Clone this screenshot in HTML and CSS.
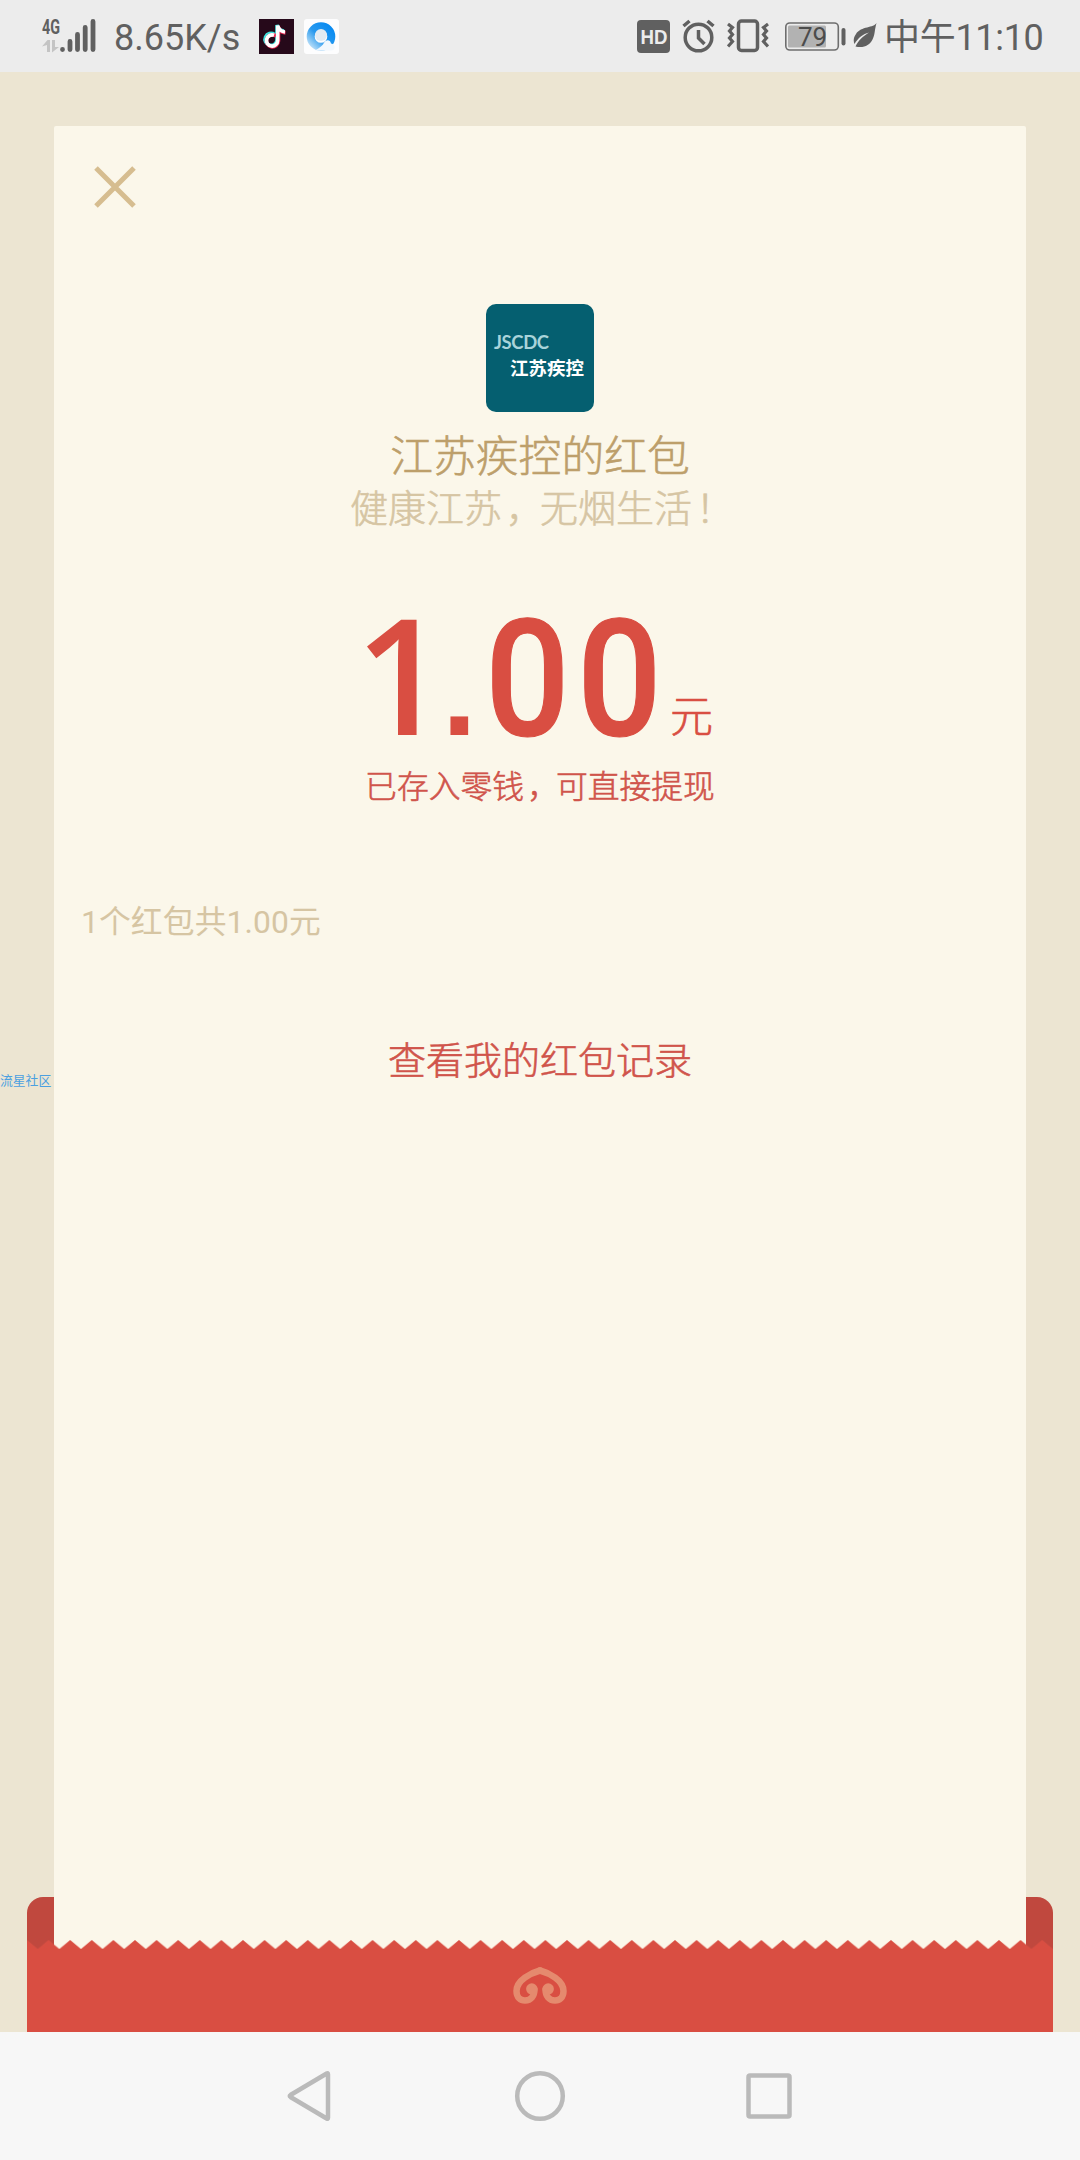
FILE: index.html
```
<!DOCTYPE html>
<html lang="zh-CN">
<head>
<meta charset="utf-8">
<title>红包</title>
<link rel="stylesheet" href="styles.css">
</head>
<body>
<header class="status">
  <svg class="signal" width="54" height="36" viewBox="0 0 54 36">
    <text class="signal-label" x="0" y="15" textLength="18" lengthAdjust="spacingAndGlyphs">4G</text>
    <path class="signal-data" d="M0 27.500L5.500 21H8v12H5V26zM10 21h3v7h4L10 33.500z"/>
    <path class="signal-bars" d="M20.500 30.500v.1M28 22.500v8M35.500 15.500v15M43.200 8.500v22M51 2.500v28"/>
  </svg>
  <span class="speed">8.65K/s</span>
  <svg class="app-icon tiktok" width="35" height="35" viewBox="0 0 35 35">
    <rect width="35" height="35" fill="#26091a"/>
    <g fill="none" stroke-width="3.600">
      <path stroke="#3fe0dd" d="M15.500 15.500a6 6 0 1 0 2.500 5V6c1 4 3 5.500 7 6"/>
      <path stroke="#ee2b55" d="M17 17a6 6 0 1 0 2.500 5V8c1 4 3 5.500 7 6"/>
      <path stroke="#fff" d="M15 16.200a5.600 5.600 0 1 0 3.700 5.300V6.500c.8 4 3 6 7.300 6.500"/>
    </g>
  </svg>
  <svg class="app-icon browser" width="35" height="35" viewBox="0 0 35 35">
    <defs><linearGradient id="ring" x1="1" y1="0" x2="0" y2="1"><stop offset="0" stop-color="#078af2"/><stop offset=".55" stop-color="#2899ee"/><stop offset="1" stop-color="#b9def8"/></linearGradient></defs>
    <rect width="35" height="35" rx="3" fill="#fdfdfe"/>
    <circle cx="17" cy="17.500" r="10.300" fill="none" stroke="url(#ring)" stroke-width="8"/>
    <circle cx="17" cy="16" r="6" fill="#e3ebf2"/>
    <path d="M11 31.500c3-2 5-3 8-6 2-5 7-6 8-1 5 1 5 7 0 7z" fill="#f2f8fd"/>
  </svg>
  <div class="status-right">
    <svg class="hd" width="33" height="33" viewBox="0 0 33 33">
      <rect width="33" height="33" rx="4" fill="#606060"/>
      <text class="hd-label" x="3.500" y="24" textLength="27" lengthAdjust="spacingAndGlyphs">HD</text>
    </svg>
    <svg class="alarm" width="34" height="34" viewBox="0 0 34 34" fill="none" stroke="#606060" stroke-width="3.500">
      <circle cx="16.500" cy="18.500" r="13.300"/><path d="M16.500 11v8l6 6M1.500 7l6-5M31.500 7l-6-5"/>
    </svg>
    <svg class="vibrate" width="42" height="34" viewBox="0 0 42 34" fill="none" stroke="#606060" stroke-width="3.500">
      <rect x="11.500" y="2" width="19" height="29.500" rx="3"/>
      <path stroke-width="3.200" d="M1 5l4.500 3.500-3 3.500 3 3.500-3 3.500 3 3.500-4.500 5M41 5l-4.500 3.500 3 3.500-3 3.500 3 3.500-3 3.500 4.500 5"/>
    </svg>
    <svg class="battery" width="61" height="30" viewBox="0 0 61 30">
      <rect x=".8" y="1" width="52.500" height="27" rx="4" fill="none" stroke="#6e6e6e" stroke-width="1.600"/>
      <rect x="3" y="3.500" width="38" height="22" rx="1.500" fill="#b2b2b2"/>
      <rect x="56.500" y="6" width="4" height="17.500" rx="2" fill="#606060"/>
      <text class="battery-label" x="13" y="24">79</text>
    </svg>
    <svg class="leaf" width="24" height="25" viewBox="0 0 24 25">
      <path fill="#606060" d="M23.500 0C21 5 8 3 3 11c-3 4-2.500 8-1.500 10C5 15 10 11 16 9.500 10 13 5 18 2.500 23.500c8 2 14-1 17-7C22 12 21.500 7 23.500 0z"/>
    </svg>
    <span class="time">中午11:10</span>
  </div>
</header>

<main class="page">
  <div class="envelope-back"></div>
  <section class="card">
    <svg class="close" width="42" height="42" viewBox="0 0 42 42"><path d="M2 2l38 38M40 2L2 40" stroke="#d6bd90" stroke-width="5"/></svg>
    <div class="avatar">
      <span class="avatar-en">JSCDC</span>
      <span class="avatar-cn">江苏疾控</span>
    </div>
    <h1 class="sender">江苏疾控的红包</h1>
    <p class="wish">健康江苏<span class="mark">，</span>无烟生活<span class="mark">！</span></p>
    <div class="amount">
      <span class="one">1</span><span class="dot">.</span><span class="digit">0</span><span class="digit">0</span><span class="unit">元</span>
    </div>
    <p class="saved">已存入零钱<span class="mark">，</span>可直接提现</p>
    <p class="summary">1个红包共1.00元</p>
    <a class="records">查看我的红包记录</a>
  </section>
  <footer class="envelope-front">
    <svg class="teeth" width="1026" height="9.500">
      <defs><pattern id="tooth" width="21.600" height="9.500" patternUnits="userSpaceOnUse"><path d="M0 0L10.800 9L21.600 0V9.500H0z" fill="#d94e42"/></pattern></defs>
      <rect width="1026" height="9.500" fill="url(#tooth)"/>
    </svg>
    <div class="envelope-body">
      <svg class="emblem" width="54" height="39" viewBox="0 0 54 39">
        <g fill="none" stroke="#e58a6e" stroke-width="6.500" stroke-linecap="round">
          <path d="M27 4.500C18 7 3.500 14 3.500 25c0 6.500 4 9.500 8.500 9.500 6 0 9.500-4.500 9.500-11"/>
          <path d="M27 4.500C36 7 50.500 14 50.500 25c0 6.500-4 9.500-8.500 9.500-6 0-9.500-4.500-9.500-11"/>
        </g>
        <circle cx="18.800" cy="23" r="5.700" fill="#e58a6e"/><circle cx="35.200" cy="23" r="5.700" fill="#e58a6e"/>
      </svg>
    </div>
  </footer>
  <span class="watermark">流星社区</span>
</main>

<nav class="nav">
  <svg width="50" height="54" viewBox="0 0 50 54"><path d="M44 5.200v43.600q0 1.500-1.300.7L6.500 28q-1.500-1 0-2L42.700 4.500q1.300-.8 1.300.7z"/></svg>
  <svg width="54" height="54" viewBox="0 0 54 54"><circle cx="28" cy="27" r="22.800"/></svg>
  <svg width="50" height="54" viewBox="0 0 50 54"><rect x="4.500" y="6.500" width="41" height="41" rx="1.500"/></svg>
</nav>
</body>
</html>
```
FILE: styles.css
```
* { box-sizing: border-box; }
body {
  margin: 0;
  height: 2160px;
  display: flex;
  flex-direction: column;
  background: #ece5d2;
  font-family: Roboto, "Noto Sans CJK SC", sans-serif;
  font-weight: 400;
}
h1, p { margin: 0; font-weight: 300; }
svg { display: block; flex: none; }

.status {
  height: 72px;
  flex: none;
  display: flex;
  align-items: flex-start;
  padding: 19px 36px 0 42px;
  background: #ececec;
  color: #606060;
  font-size: 36px;
  line-height: 38px;
}
.signal { overflow: visible; }
.signal-label { font: 700 20px Roboto, sans-serif; fill: #606060; }
.signal-data { fill: #c4c4c4; }
.signal-bars { fill: none; stroke: #606060; stroke-width: 4.8; stroke-linecap: round; }
.speed { margin-left: 18px; width: 127px; white-space: nowrap; }
.tiktok { margin-left: 18px; }
.browser { margin-left: 10px; }
.status-right { display: flex; margin-left: auto; }
.hd { margin: 1px 12px 0 0; }
.hd-label { font: 700 21px "Liberation Sans", sans-serif; fill: #ececec; }
.alarm { margin-right: 11px; }
.vibrate { margin-right: 16px; }
.battery { margin: 3px 7px 0 0; }
.battery-label { font: 400 26px Roboto, sans-serif; fill: #4c4c4c; }
.leaf { margin: 4px 7px 0 0; }
.time { width: 160px; white-space: nowrap; letter-spacing: -.3px; }

.page {
  position: relative;
  flex: 1;
  display: flex;
  flex-direction: column;
  padding-top: 54px;
}
.envelope-back {
  position: absolute;
  left: 27px;
  right: 27px;
  bottom: 0;
  height: 135px;
  border-radius: 16px 16px 0 0;
  background: #c0483e;
}
.card {
  position: relative;
  flex: 1;
  margin: 0 54px -9px;
  background: #fbf7ea;
  display: flex;
  flex-direction: column;
  align-items: center;
  border-radius: 2px 2px 0 0;
}
.close { align-self: flex-start; margin: 40px 0 0 40px; }
.avatar {
  width: 108px;
  height: 108px;
  margin-top: 96px;
  padding: 28px 0 0 8px;
  border-radius: 10px;
  background: #055f70;
  display: flex;
  flex-direction: column;
}
.avatar-en { font: 700 18.500px/20px Lato, sans-serif; color: #a9d3da; letter-spacing: -.4px; }
.avatar-cn { margin: 5px 0 0 16px; font: 700 18.500px/20px "Noto Sans CJK SC", sans-serif; color: #fff; white-space: nowrap; }
.sender, .wish, .unit, .saved, .records { -webkit-text-stroke: .6px currentColor; }
.mark { display: inline-block; transform: translateX(.1em); }
.sender { margin-top: 16px; font: 300 42.800px/50px "Noto Sans CJK SC", sans-serif; color: #bd9f6b; }
.wish { margin-top: 5px; font: 300 38px/46px "Noto Sans CJK SC", sans-serif; color: #d6c5a3; }
.amount {
  margin-top: 81px;
  height: 125px;
  width: 350px;
  display: flex;
  align-items: baseline;
  line-height: 125px;
  color: #d94e42;
}
.digit { width: 92px; text-align: center; font-family: Roboto, sans-serif; font-weight: 500; font-size: 163px; transform: scaleX(.91); -webkit-text-stroke: 1.2px currentColor; }
.one { width: 92px; margin-left: -10px; font-family: "Open Sans", sans-serif; font-weight: 600; font-size: 161px; }
.dot { width: 35px; margin: 0 4px 0 -5px; font-family: "Liberation Sans", sans-serif; font-weight: 700; font-size: 125px; }
.unit { margin-left: 5px; font: 300 43px/50px "Noto Sans CJK SC", sans-serif; transform: translateY(-3px); }
.saved { margin-top: 29px; font: 300 31.800px/40px "Noto Sans CJK SC", sans-serif; color: #d0544b; }
.summary { align-self: flex-start; margin: 98px 0 0 27px; font-size: 31.800px; line-height: 40px; letter-spacing: .1px; font-weight: 400; color: #d6c5a3; }
.records { margin-top: 91px; font: 300 38px/50px "Noto Sans CJK SC", sans-serif; color: #d0544b; }

.envelope-front { position: relative; flex: none; margin: 0 27px; }
.envelope-body { height: 83px; margin-top: -.5px; padding-top: 17px; background: #d94e42; display: flex; justify-content: center; }
.watermark {
  position: absolute;
  left: 0;
  top: 1000px;
  font: 400 12.800px/16px "Noto Sans CJK SC", sans-serif;
  color: #4ba0e0;
}

.nav {
  flex: none;
  height: 128px;
  display: flex;
  align-items: center;
  justify-content: space-between;
  padding: 0 286px 0 284px;
  background: #f7f7f7;
}
.nav svg { fill: none; stroke: #bababa; stroke-width: 4.500; }
```
